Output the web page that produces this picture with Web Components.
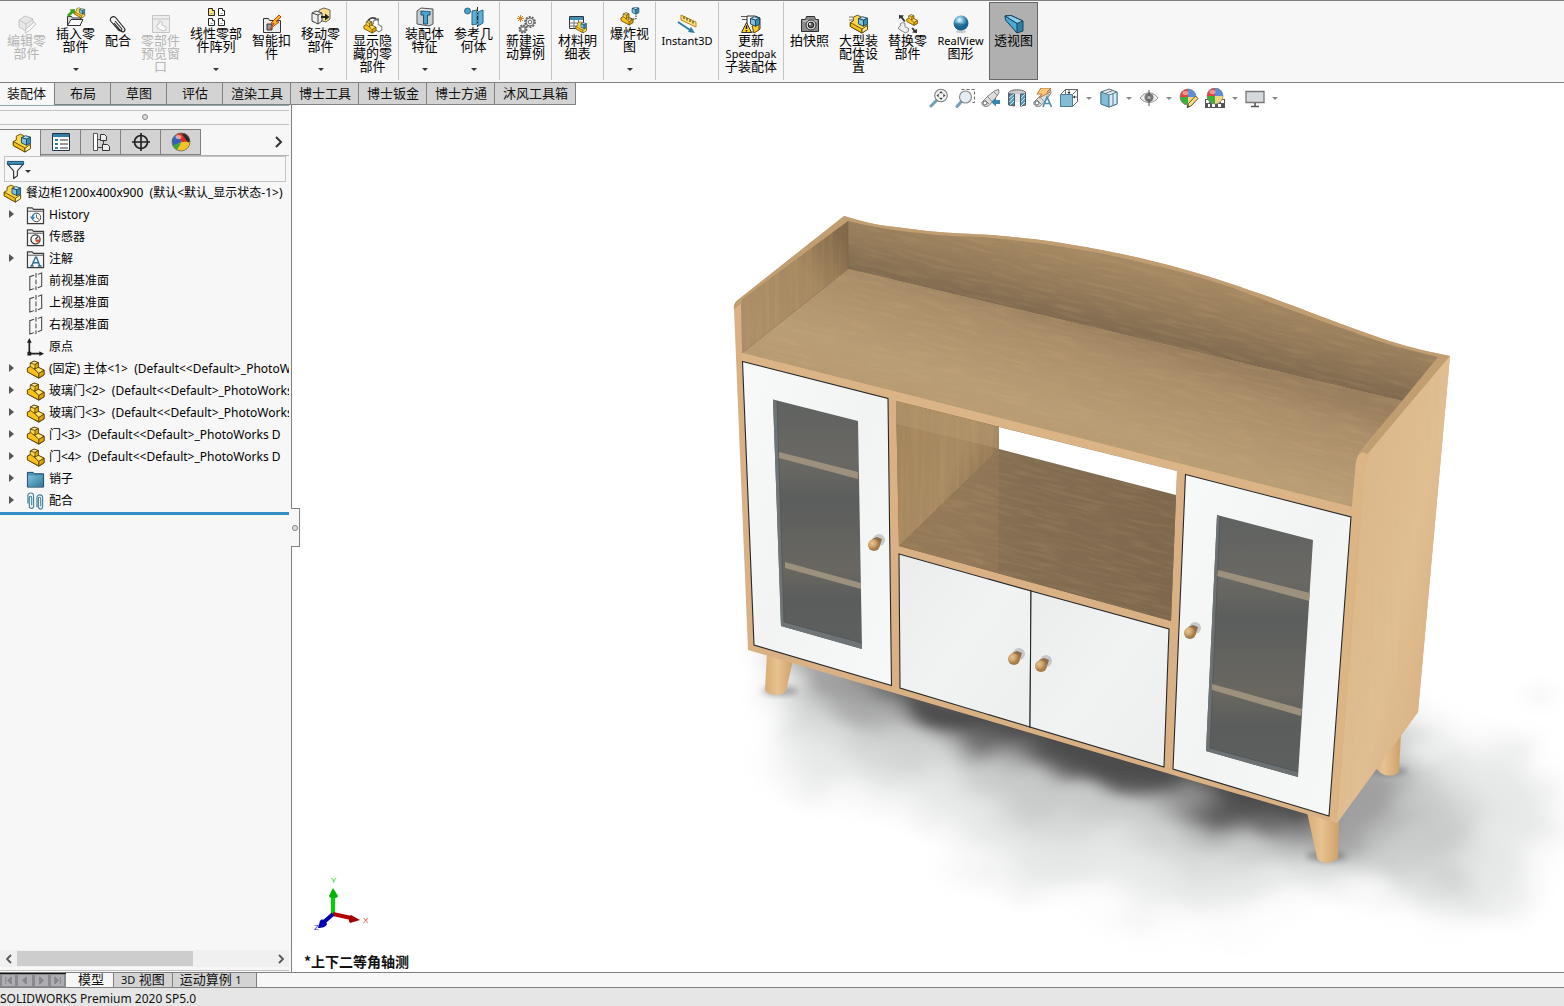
<!DOCTYPE html>
<html lang="zh-CN">
<head>
<meta charset="utf-8">
<title>SOLIDWORKS Premium 2020 SP5.0</title>
<style>
  html, body { height: 100%; margin: 0; }
  body { font: 12px/16px "Noto Sans", "Noto Sans CJK SC", sans-serif; color: #111; background: #fff; overflow: hidden; }
</style>
</head>
<body>
<sw-app>
  <sw-ribbon slot="ribbon">
    <sw-command icon="edit" disabled>编辑零部件</sw-command>
    <sw-command icon="insert" menu>插入零部件</sw-command>
    <sw-command icon="clip" size="s">配合</sw-command>
    <sw-command icon="preview" disabled>零部件预览窗口</sw-command>
    <sw-command icon="pattern" size="l" menu>线性零部件阵列</sw-command>
    <sw-command icon="fastener">智能扣件</sw-command>
    <sw-command icon="move" menu>移动零部件</sw-command>
    <sw-divider></sw-divider>
    <sw-command icon="showhide">显示隐藏的零部件</sw-command>
    <sw-divider></sw-divider>
    <sw-command icon="feature" menu>装配体特征</sw-command>
    <sw-command icon="refgeo" menu>参考几何体</sw-command>
    <sw-divider></sw-divider>
    <sw-command icon="motion">新建运动算例</sw-command>
    <sw-divider></sw-divider>
    <sw-command icon="bom">材料明细表</sw-command>
    <sw-divider></sw-divider>
    <sw-command icon="explode" menu>爆炸视图</sw-command>
    <sw-divider></sw-divider>
    <sw-command icon="instant" size="w"><small>Instant3D</small></sw-command>
    <sw-divider></sw-divider>
    <sw-command icon="speedpak" size="l">更新 <small>Speedpak</small> 子装配体</sw-command>
    <sw-divider></sw-divider>
    <sw-command icon="camera">拍快照</sw-command>
    <sw-command icon="large">大型装配体设置</sw-command>
    <sw-command icon="replace">替换零部件</sw-command>
    <sw-command icon="realview" size="m"><small>RealView</small> 图形</sw-command>
    <sw-command icon="perspective" pressed>透视图</sw-command>
  </sw-ribbon>

  <sw-tabs slot="tabs">
    <sw-tab active>装配体</sw-tab>
    <sw-tab>布局</sw-tab>
    <sw-tab>草图</sw-tab>
    <sw-tab>评估</sw-tab>
    <sw-tab>渲染工具</sw-tab>
    <sw-tab>博士工具</sw-tab>
    <sw-tab>博士钣金</sw-tab>
    <sw-tab>博士方通</sw-tab>
    <sw-tab last>沐风工具箱</sw-tab>
  </sw-tabs>

  <sw-feature-panel slot="panel">
    <sw-node icon="asm" root>餐边柜1200x400x900&nbsp; (默认&lt;默认_显示状态-1&gt;)</sw-node>
    <sw-node icon="history" more>History</sw-node>
    <sw-node icon="sensor">传感器</sw-node>
    <sw-node icon="note" more>注解</sw-node>
    <sw-node icon="plane">前视基准面</sw-node>
    <sw-node icon="plane">上视基准面</sw-node>
    <sw-node icon="plane">右视基准面</sw-node>
    <sw-node icon="origin">原点</sw-node>
    <sw-node icon="part" more>(固定) 主体&lt;1&gt;&nbsp; (Default&lt;&lt;Default&gt;_PhotoWorks</sw-node>
    <sw-node icon="part" more>玻璃门&lt;2&gt;&nbsp; (Default&lt;&lt;Default&gt;_PhotoWorks</sw-node>
    <sw-node icon="part" more>玻璃门&lt;3&gt;&nbsp; (Default&lt;&lt;Default&gt;_PhotoWorks</sw-node>
    <sw-node icon="part" more>门&lt;3&gt;&nbsp; (Default&lt;&lt;Default&gt;_PhotoWorks D</sw-node>
    <sw-node icon="part" more>门&lt;4&gt;&nbsp; (Default&lt;&lt;Default&gt;_PhotoWorks D</sw-node>
    <sw-node icon="folder" more>销子</sw-node>
    <sw-node icon="mates" more>配合</sw-node>
  </sw-feature-panel>

  <sw-viewport slot="view">
    <sw-hud slot="hud"></sw-hud>
    <sw-cabinet></sw-cabinet>
    <sw-triad slot="triad"></sw-triad>
    <span slot="caption">*上下二等角轴测</span>
  </sw-viewport>

  <sw-motion-tabs slot="motion"></sw-motion-tabs>
  <sw-status slot="status">SOLIDWORKS Premium 2020 SP5.0</sw-status>
</sw-app>

<script>
const define = (name, css, html, ready) => customElements.define(name, class extends HTMLElement {
  connectedCallback() {
    if (this.shadowRoot) return;
    const root = this.attachShadow({ mode: 'open' });
    root.innerHTML = `<style>:host,*{box-sizing:border-box}button,input{font:inherit;color:inherit;margin:0;padding:0;border:0;background:none}${css}</style>` +
      (typeof html === 'function' ? html(this) : html);
    if (ready) ready(this, root);
  }
});

/* ---------- icon library, 20 x 20 grid ---------- */
const PART = `<g stroke="#5a4300" stroke-width=".9" stroke-linejoin="round"><path fill="#ffd84a" d="M1.500 8.500l3-1.500V3.200l4-2 4.500 1.500v5l6 3v5l-5.500 3.600L1.500 12.500z"/><path fill="#f8c21e" d="M1.500 8.500L5 7l8.500 6.500v5.300L1.500 12.500z"/><path fill="#ffe36a" d="M8.500 9l4-1.500 6.500 3.200-5.500 3.500z"/><path fill="#e0a40e" d="M13.500 14.200l5.500-3.500v5l-5.500 3.100z"/><path fill="#ffee9a" d="M4.500 3.200l4-2 4.500 1.500-3.500 2z"/><path fill="#e3aa12" d="M9.500 4.700l3.500-2v5L9.500 9.500z"/></g>`;
const CUBE = `<g stroke="#17445c" stroke-width=".9" stroke-linejoin="round"><path fill="#b9e2f4" d="M9.500 4.500l4-1.800 5 1.500-4 2z"/><path fill="#7fc1e0" d="M9.500 4.500l5 1.700v6l-5-2.200z"/><path fill="#3e8fb8" d="M14.500 6.200l4-2v6l-4 2z"/></g>`;
const ASM = `<g stroke="#5a4300" stroke-width=".9" stroke-linejoin="round"><path fill="#ffd84a" d="M1.300 8.500l3-1.500V3.200l4-2 3.500 1.500v6l6.700 2v4.500L13 19 1.300 12.500z"/><path fill="#f8c21e" d="M1.300 8.500L13 15v4L1.300 12.500z"/><path fill="#fff0a0" d="M13 15l5.500-3.500v4L13 19z"/></g>${CUBE}`;
const FOLDER = `<path d="M1.500 3.500V2h5l1.500 1.500h10.500v15h-17z" fill="#ececec" stroke="#3c3c3c" stroke-width="1.200"/><path d="M2 5.500h16" stroke="#555"/><path d="M3 6.500h14v11H3z" fill="#f6f6f6"/>`;
const BALL = `<circle cx="9" cy="9" r="8" fill="#fff"/><path d="M9 9V1a8 8 0 0 0-8 8z" fill="#e8443a"/><path d="M9 9h8a8 8 0 0 0-8-8z" fill="#5b8fdd"/><path d="M9 9H1a8 8 0 0 0 8 8z" fill="#3cae3c"/><path d="M9 9v8a8 8 0 0 0 8-8z" fill="#f3d67c"/><circle cx="9" cy="9" r="8" fill="none" stroke="#777" stroke-width=".7"/><ellipse cx="6.500" cy="5" rx="3" ry="2" fill="#fff" opacity=".45"/>`;
const SCOPE = `<path d="M1 14l6-6 7-5.500 3.500-1 .5 3.500-4.500 6.500-5.500 6c-3 2.500-8.500 0-7-3.500z" fill="#dedede" stroke="#777" stroke-width=".9"/><path d="M6.500 8.500l4.500 5M13 3.500l3 4M4 12l4 4" stroke="#888" fill="none"/><circle cx="4" cy="15" r="2" fill="#fff" stroke="#666"/>`;
const ICONS = {
  part: PART, asm: ASM,
  edit: `<g opacity=".35" stroke="#666" fill="#ccc"><path d="M2 6l6-4 8 3v7l-7 5-7-4z"/><path d="M2 6l7 4v7M9 10l7-5"/><path fill="#fff" d="M17 8l2 2-7 7-4 2 1-4z"/></g>`,
  insert: `<path d="M1.500 18.500V9.500h4l1 1.500h8v7.500z" fill="#ddd" stroke="#333"/><path d="M1.500 18.500L5 12.500h12l-3 6z" fill="#fafafa" stroke="#333"/><path d="M1 8l4-4-1.500-1.500L9 2l-.5 5.500L7 6 3 10z" fill="#35a022"/><g transform="translate(8 0) scale(.58)">${ASM}</g>`,
  clip: `<path d="M6 9l7 8c2 2 5 0 3.500-2.500L8 4C5.500 1 .5 4 3 7.500l8 9c2 1 3.500-.5 2.500-2L7 7" fill="none" stroke="#222" stroke-width="1.100"/>`,
  preview: `<g opacity=".35"><path d="M1.500 1.500h17v17h-17z" fill="#ddd" stroke="#666"/><path d="M2 5h16" stroke="#666"/><path d="M6 11l2-1V7l3 1v3l4 2v3l-3 1-6-3z" fill="#fff" stroke="#666"/></g>`,
  pattern: `<g stroke="#222" fill="#fff"><path fill="#ffe27a" d="M2.500 1.500h4v2h2v5h-6z"/><path d="M12.500 1.500h4v2h2v5h-6zM2.500 11.500h4v2h2v5h-6zM12.500 11.500h4v2h2v5h-6z"/><path d="M4.500 6.500h2M14.500 6.500h2M4.500 16.500h2M14.500 16.500h2" stroke="#999"/></g>`,
  fastener: `<path d="M1.500 18.500V4.500h5l1 2h11v12z" fill="#eee" stroke="#333"/><path d="M5 10h5v6H5z" fill="#999" stroke="#333"/><path d="M17 1L9 9l3 .5L8 15l9-7-3-.5L19 3z" fill="#ffb52e" stroke="#c4400c"/>`,
  move: `<path d="M8 3l5-2 6 2v9l-4 3-7-2z" fill="#f9dc8c" stroke="#665"/><path d="M1 6l4-2 6 2v8l-4 3-6-3z" fill="#eee" stroke="#444"/><path d="M1 6l6 2 4-2M7 8v9" fill="none" stroke="#444"/><path d="M10 9h4V6.500L18.500 10 14 13.500V11h-4z" fill="#222"/>`,
  showhide: `<path d="M4 7c2-5 9-5 10-2l2-1-1 5-4-2 1.500-.8C11 4 7 4 6.500 7z" fill="#444"/><g transform="translate(8 5) scale(.6 .68)"><path d="M1 9l3-2V3l4-2 4 1v6l6 3v5l-5 3-12-7z" fill="#fff" stroke="#777" stroke-width="1.500"/></g><g transform="translate(0 6) scale(.68)">${PART}</g>`,
  feature: `<path d="M2 4l4-3 12 1v15l-4 2-12-2z" fill="#c9cdd0" stroke="#555"/><path d="M6 4h9v4h-2.500v9h-4V8H6z" fill="#4aa3cc" stroke="#1e5068"/><path d="M5 2.500l11 1" stroke="#fff"/>`,
  refgeo: `<circle cx="3.500" cy="4" r="3" fill="#4aa3cc" stroke="#1e5068" stroke-width=".8"/><path d="M8 4l5-1v14l-5 1zM14 5l5-2v13l-5 3z" fill="#5fb0d6" stroke="#276987"/><path d="M13.500 0v20" stroke="#222" stroke-dasharray="4 2 1 2"/>`,
  motion: `<g fill="none" stroke="#666"><circle cx="14" cy="8" r="5" stroke-width="1.800" stroke-dasharray="2 1.100"/><circle cx="14" cy="8" r="4" fill="#eee"/><circle cx="14" cy="8" r="1.800" fill="#fff"/><circle cx="7" cy="15" r="3.500" fill="#999" stroke-width="2" stroke-dasharray="1.800 .9"/></g><circle cx="7" cy="15" r="1.300" fill="#fff"/><path d="M4.500 1v7M1 4.500h7M2 2l5 5M7 2L2 7" stroke="#e0811c"/>`,
  bom: `<path d="M1.500 2.500h14v12h-14z" fill="#fff" stroke="#334"/><path d="M2 3h13v3H2z" fill="#3f8fb5"/><path d="M2 9h13M2 12h13M6 6v8M10.500 6v8" stroke="#556" stroke-width=".8"/><g transform="translate(7 7) scale(.62)">${ASM}</g>`,
  explode: `<g transform="translate(0 5) scale(.68)">${PART}</g><g transform="translate(5 -2) scale(.75)">${CUBE}</g><path d="M8 12h8V8" fill="none" stroke="#222" stroke-dasharray="1.500 1"/>`,
  instant: `<path d="M4 1l15 7v5L4 6z" fill="#ffe27a" stroke="#b48a1a"/><path d="M7 2.500v2.500M10 4v2.500M13 5.500V8M16 7v2.500" stroke="#222"/><path d="M1 8l12 8" stroke="#2e7ea8" stroke-width="2"/><path d="M11 18l7 1-4-6z" fill="#2e7ea8"/>`,
  speedpak: `<path d="M0 2.500h7M1 5.500h5" stroke="#555"/><path d="M6 2h8l5 2v11l-5 3H6z" fill="#f6f6f6" stroke="#333"/><path fill="#f8c62c" stroke="#6a5000" d="M11 12l7-2v6l-5 3z"/><g>${CUBE}</g><path d="M5.500 8.500l5 10H.5z" fill="#ffd21e" stroke="#333"/><path d="M5.500 11.500v3.500M5.500 16v1.500" stroke="#111" stroke-width="1.500"/>`,
  camera: `<path d="M1.500 5.500h4l1-3h8l1 3h3v12h-17z" fill="#8c8c8c" stroke="#2e2e2e"/><path d="M3 7h14" stroke="#ddd"/><circle cx="11" cy="11" r="5" fill="#ddd" stroke="#333"/><circle cx="11" cy="11" r="2.800" fill="#666" stroke="#111"/><circle cx="10" cy="10" r="1" fill="#fff"/>`,
  large: `<path d="M0 3h4M0 6h4" stroke="#777"/>${ASM}`,
  replace: `<g transform="translate(8 0) scale(.6)">${PART}</g><g transform="translate(0 8) scale(.58)"><path d="M1 9l3-2V3l4-2 4 1v6l6 3v5l-5 3-12-7z" fill="#eee" stroke="#777" stroke-width="1.500"/></g><path d="M1 1l5 .5-1.500 1.500 3 4-1.500 1-3-4L1 5zM19 19l-5-.5 1.500-1.500-2-2.500 1.500-1 2 2.500L19 15z" fill="#333"/>`,
  realview: `<defs><radialGradient id="s" cx=".4" cy=".3"><stop offset="0" stop-color="#fff"/><stop offset=".35" stop-color="#8ccbe8"/><stop offset="1" stop-color="#1e6a96"/></radialGradient></defs><ellipse cx="10" cy="17.500" rx="5" ry="1.500" fill="#ccc"/><circle cx="10" cy="9" r="7.500" fill="url(#s)"/><path d="M3 10c4-3 9 2 14-1-1 9-13 10-14 1z" fill="#175c86" opacity=".55"/>`,
  perspective: `<path d="M1 2l6-.5L19 7v10l-6 2z" fill="#2f7ea5" stroke="#154258"/><path d="M1 2l6-.5L19 7l-6 2.500z" fill="#8bd0ee" stroke="#154258"/><path d="M1 2l12 7.500V19L1.500 6z" fill="#4ca8d4" stroke="#154258"/>`,
  history: `${FOLDER}<circle cx="11" cy="12" r="4.500" fill="#fff" stroke="#444"/><path d="M11 9v3l2.500 2" stroke="#444" fill="none"/><path d="M4 11l3 4 2.500-3.500H8c0-3 3-4 3-4-4 0-5 3-5 3.800z" fill="#2e88b4"/>`,
  sensor: `${FOLDER}<circle cx="10" cy="12" r="4.800" fill="#fff" stroke="#333" stroke-width="1.300"/><path d="M10 12l2.500-3" stroke="#222" stroke-width="1.300"/><path d="M10 12h4l-1 4-3-2z" fill="#e04a1c"/>`,
  note: `${FOLDER}<path d="M6 16.500l4-9h1l3.500 9M7.500 13.500h5.500M4.500 16.800h3.500M12.500 16.800h4" fill="none" stroke="#2e6f96" stroke-width="1.500"/>`,
  plane: `<path d="M8.500 3.500L4 5v14L8.500 17.500M12.500 2.500l4-1.500v14l-4 1.500" fill="none" stroke="#444" stroke-width="1.100"/><path d="M10.500 1v18" stroke="#333" stroke-dasharray="5 2"/>`,
  origin: `<path d="M3.500 4v12.500H16" fill="none" stroke="#222" stroke-width="1.800"/><path d="M3.500 0L6 5H1zM19 16.500L14 14v5z" fill="#222"/><path d="M1.500 14.500h4v4h-4z" fill="#222"/>`,
  folder: `<defs><linearGradient id="f" x2="1" y2="1"><stop stop-color="#7cc0de"/><stop offset="1" stop-color="#347695"/></linearGradient></defs><path d="M1.500 5V2.500h6L9 4h9.500v14h-17z" fill="#4c97bb" stroke="#143f54"/><path d="M2 6h16v11.500H2z" fill="url(#f)"/>`,
  mates: `<g fill="none" stroke="#43829f" stroke-width="1.200"><path d="M2 12V4c0-4 6-4 6 0v11c0 3-4.500 3-4.500 0V6c0-2 2.500-2 2.500 0v8"/><path d="M11.500 16V6c0-4 6-4 6 0v9c0 4-4.500 4-4.500 0V7c0-2 2.500-2 2.500 0v8"/></g>`,
  list: `<path d="M1.500 1.500h17v17h-17z" fill="#fff" stroke="#234"/><path d="M2 2h16v3H2z" fill="#2e7ea8"/><path d="M4 8h3M4 12h3M4 16h3" stroke="#2e7ea8" stroke-width="2"/><path d="M9 8h8M9 12h8M9 16h8" stroke="#333"/>`,
  config: `<path d="M2.500 1.500h4v17h-4z" fill="#fff" stroke="#555"/><path d="M7 7.500h3M7 15.500h4M12.500 12V8" fill="none" stroke="#444" stroke-width="1.200"/><path d="M9.500 2.500h4l2 2v4h-6zM11.500 12.500h5l2 2v4h-7z" fill="#eee" stroke="#333"/>`,
  target: `<circle cx="10" cy="10" r="6.500" fill="none" stroke="#222" stroke-width="1.700"/><path d="M10 1v18M1 10h18" stroke="#222" stroke-width="1.700"/>`,
  appearance: `<circle cx="10" cy="10" r="9" fill="#f2c522"/><path d="M1 9a9 9 0 0 1 4-6l6 7-9 4z" fill="#2f63bd"/><path d="M11 10L4.500 3.500a9 9 0 0 1 9-2l4 8z" fill="#de2d22"/><path d="M11 2l3-.5a9 9 0 0 1 5 8l-2 1z" fill="#2b2b2b"/><path d="M2 13a9 9 0 0 0 4 5l4-7z" fill="#3aa840"/><circle cx="10" cy="10" r="9" fill="none" stroke="#555" stroke-width=".7"/><ellipse cx="7.500" cy="5" rx="3" ry="2" fill="#fff" opacity=".55"/>`,
  funnel: `<path d="M2 4.500l6 7v8l4-3v-5l6-7z" fill="#f4f8fa" stroke="#333" stroke-width="1.200"/><path d="M1.500 1.500h17v3h-17z" fill="#3c93bd" stroke="#1e5068"/>`,
  zoomfit: `<path d="M8 12l-6 6" stroke="#6fa0b8" stroke-width="3" stroke-linecap="round"/><circle cx="12" cy="7.500" r="6.300" fill="#f4f7f8" stroke="#777" stroke-width="1.100"/><path d="M12 3l2 2.200h-4zM12 12l2-2.200h-4zM7.500 7.500L9.700 5.500v4zM16.500 7.500l-2.200-2v4z" fill="#444"/>`,
  zoomarea: `<path d="M6.500 1.500h13v13h-4" fill="none" stroke="#666" stroke-dasharray="3 2"/><path d="M6 14l-4 4.500" stroke="#6fa0b8" stroke-width="3" stroke-linecap="round"/><circle cx="10.500" cy="9" r="6" fill="#e4eef4" stroke="#888" stroke-width="1.100"/>`,
  prev: `${SCOPE}<path d="M19 12h-4V9.500L10 14l5 4.500V16h4z" fill="#3a86ad"/>`,
  section: `<path d="M1.500 4.500C4 1 15 1 18.500 4v13l-5 1V9c-2-1-5-1-6 0v9l-6-1z" fill="#c9cdd0" stroke="#666"/><path d="M7.500 6h6v8h-6z" fill="#e4e6e8"/><path d="M2 6h5.500v11.500L2 16.500zM13.500 6h5v11l-5 1z" fill="#5f9dbb" stroke="#456"/><path d="M2 10l5-4M2 14l5-5M3 17l4-4M14 10l4-4M14 14l4-4M14 18l4-4" stroke="#c8e4f0"/>`,
  dynview: `${SCOPE}<path d="M8 0h10l-4 4h3L6 10l3-4H4z" fill="#ffc878" stroke="#b8753c"/><path d="M10 19l4-10 4.500 10M11.500 15.500h5" fill="none" stroke="#4f90b0" stroke-width="1.700"/>`,
  orient: `<path d="M1.500 6.500l5-5h12v12l-5 5M13.500 6.500l5-5M6.500 1.500v5M13.500 9h5M10 2v3" fill="#fff" stroke="#666"/><path d="M1.500 6.500h12v12h-12z" fill="#84bcd8" stroke="#4a7c96"/><path d="M8.500 4h3L10 6.500zM16 7.500v3L14 9z" fill="#333"/>`,
  style: `<path d="M2 4l8-3 8 3v12l-8 3-8-3z" fill="#eef3f5" stroke="#567"/><path d="M2 4l8 3v12l-8-3z" fill="#84bcd8" stroke="#4a7c96"/><path d="M10 7l8-3v12l-8 3z" fill="#d4eaf4" stroke="#4a7c96"/><path d="M6 5.500l8-3M14 5.500v12" stroke="#678"/>`,
  eye: `<path d="M1 10c5-7 13-7 18 0-5 6-13 6-18 0z" fill="#eee" stroke="#999"/><circle cx="10" cy="9.500" r="4.500" fill="#777"/><path d="M10 2v16" stroke="#555"/><circle cx="10" cy="9.500" r="1.500" fill="#bbb"/>`,
  appear: `${BALL}<path d="M16.500 8l2.500 2.500-7 7.500-4 1.500 1.500-4z" fill="#f6dc8c" stroke="#665522"/><path d="M8 19.500l1-2.500 1.500 1.500z" fill="#333"/>`,
  scene: `<path d="M0 11h20v9H0z" fill="#555"/><path d="M1 12h3v3H1zM7 16h3v3H7zM13 16h3v3h-3zM16 12h3v3h-3zM3 16h2v3H3z" fill="#fff"/><g transform="translate(1 -1)">${BALL}</g>`,
  monitor: `<path d="M1 3.500h18v11H1z" fill="#d6d9dc" stroke="#777" stroke-width="1.300"/><path d="M10 15v3M6 18.500h8" stroke="#555" stroke-width="1.600"/>`
};
define('sw-icon', `:host{display:block;width:20px;height:20px;flex:none}svg{display:block;width:100%;height:100%}`,
  el => `<svg viewBox="0 0 20 20" aria-hidden="true">${ICONS[el.getAttribute('name')]}</svg>`);

/* ---------- application frame ---------- */
define('sw-app', `
  :host{display:grid;height:100vh;grid-template:auto auto minmax(0,1fr) auto auto / 292px minmax(0,1fr);background:#fff}
  ::slotted([slot=ribbon]){grid-area:1/1/2/3}
  ::slotted([slot=view]){grid-area:2/1/4/3}
  ::slotted([slot=tabs]){grid-area:2/1/3/3;z-index:1;justify-self:start}
  ::slotted([slot=panel]){grid-area:3/1/4/2;z-index:1}
  ::slotted([slot=motion]){grid-area:4/1/5/3}
  ::slotted([slot=status]){grid-area:5/1/6/3}`,
  `<slot name="ribbon"></slot><slot name="view"></slot><slot name="tabs"></slot><slot name="panel"></slot><slot name="motion"></slot><slot name="status"></slot>`);

define('sw-ribbon', `:host{display:block;border-top:1px solid #808080;border-bottom:1px solid #808080;background:#f7f7f7}
  nav{display:flex;height:81px;padding:1px 0 2px 2px}`, `<nav><slot></slot></nav>`);
define('sw-divider', `:host{display:block;flex:none;width:3px;padding-left:1px}i{display:block;width:1px;height:100%;background:#c4c4c4}`, `<i></i>`);
define('sw-command', `
  :host{display:block;flex:none;width:49px;font:13px/13px "Liberation Sans","Noto Sans CJK SC",sans-serif;color:#000}
  :host([size=s]){width:36px}:host([size=m]){width:57px}:host([size=w]){width:60px}:host([size=l]){width:62px}
  button{display:flex;flex-direction:column;align-items:center;width:100%;height:100%;padding:12px 3px 0}
  :host([menu]) button{padding-top:5px}
  :host([disabled]) button{color:#b4b4b4}
  :host([pressed]) button{background:#b0b0b0;outline:1px solid #666;outline-offset:-1px}
  span{display:block;text-align:center}
  ::slotted(small){font:11px/11px "Noto Sans",sans-serif}
  i{display:none;margin:auto 0 9px;border:3px solid transparent;border-top-color:#333;border-bottom:0}
  :host([menu]) i{display:block}`,
  el => `<button type="button"${el.hasAttribute('disabled') ? ' disabled' : ''}><sw-icon name="${el.getAttribute('icon')}"></sw-icon><span><slot></slot></span><i></i></button>`);

define('sw-tabs', `:host{display:flex}`, `<slot></slot>`);
define('sw-tab', `
  :host{display:block;font-size:13px;line-height:20px}
  button{display:block;min-width:56px;height:22px;padding:0 7px 1px 8px;background:#d3d3d3;border-left:1px solid #808080;border-bottom:1px solid #808080;white-space:nowrap}
  :host([active]) button{min-width:0;padding:0 8px 1px 7px;background:#f7f7f7;border-left:0;border-bottom-color:#f7f7f7}
  :host([last]) button{border-right:1px solid #808080}`, `<button type="button"><slot></slot></button>`);

/* ---------- feature manager ---------- */
define('sw-feature-panel', `
  :host{position:relative;display:flex;flex-direction:column;min-height:0;background:#f7f7f7;border-right:1px solid #808080;padding-right:2px}
  .grip{flex:none;height:20px;border-top:1px solid #8fa9b0;border-bottom:1px solid #c0c0c0;display:grid;grid-template-rows:4px 1fr;justify-items:center;align-items:center}
  .grip::before{content:"";width:100%;height:4px;border-bottom:1px solid #c4c4c4}
  .dot{width:6px;height:6px;border:1px solid #888;border-radius:50%;background:#ddd}
  .tabs{flex:none;display:flex;margin-top:4px;height:27px;border-bottom:1px solid #b0b0b0}
  .tabs button{display:grid;place-items:center;width:40px;height:26px;background:#d3d3d3;border:1px solid #808080;border-left:0}
  .tabs button.on{width:41px;padding-left:3px;height:27px;background:#f7f7f7;border-bottom:0}
  .tabs .next{margin-left:auto;width:20px;background:none;border:0}
  .filter{flex:none;display:flex;align-items:center;margin:0 3px 0 4px;height:26px;border:1px solid #c4c4c4;padding-left:1px}
  .filter sw-icon{width:19px;height:19px}
  .filter i{border:3px solid transparent;border-top-color:#333;border-bottom:0;margin-top:4px}
  .filter input{flex:1;min-width:0;outline:0}
  .tree{flex:none;overflow:hidden;border-bottom:3px solid #338fc5}
  .rest{flex:1}
  .bar{flex:none;display:flex;height:17px;background:#f0f0f0;margin-bottom:3px}
  .bar button{width:17px;display:grid;place-items:center}
  .track{flex:1;display:flex;align-items:center}.thumb{width:69%;height:15px;background:#cdcdcd}
  .foot{flex:none;height:2px;border-top:1px solid #c0c0c0}
  .handle{position:absolute;left:100%;top:403px;width:9px;height:39px;background:#f7f7f7;border:1px solid #808080;border-left:0;display:grid;place-items:center}`,
  `<div class="grip"><div class="dot"></div></div>
  <div class="tabs">
    <button type="button" class="on" aria-label="FeatureManager"><sw-icon name="asm"></sw-icon></button>
    <button type="button" aria-label="PropertyManager"><sw-icon name="list"></sw-icon></button>
    <button type="button" aria-label="ConfigurationManager"><sw-icon name="config"></sw-icon></button>
    <button type="button" aria-label="DimXpertManager"><sw-icon name="target"></sw-icon></button>
    <button type="button" aria-label="DisplayManager"><sw-icon name="appearance"></sw-icon></button>
    <button type="button" class="next" aria-label="Next"><svg width="8" height="12" viewBox="0 0 8 12"><path d="M1 1l5 5-5 5" fill="none" stroke="#333" stroke-width="2"/></svg></button>
  </div>
  <label class="filter"><sw-icon name="funnel"></sw-icon><i></i><input type="text" aria-label="Filter"></label>
  <div class="tree" role="tree"><slot></slot></div>
  <div class="rest"></div>
  <div class="bar">
    <button type="button" aria-label="Left"><svg width="6" height="10" viewBox="0 0 6 10"><path d="M5 1L1 5l4 4" fill="none" stroke="#555" stroke-width="1.800"/></svg></button>
    <div class="track"><div class="thumb"></div></div>
    <button type="button" aria-label="Right"><svg width="6" height="10" viewBox="0 0 6 10"><path d="M1 1l4 4-4 4" fill="none" stroke="#555" stroke-width="1.800"/></svg></button>
  </div>
  <div class="foot"></div>
  <div class="handle"><div class="dot"></div></div>`);
define('sw-node', `
  :host{display:flex;align-items:center;height:22px;padding-left:9px;font-size:12px;line-height:20px;color:#000}
  :host([root]){padding-left:3px}
  i{flex:none;width:5px;margin-right:12px;height:0}
  :host([more]) i{height:8px;border:4px solid transparent;border-left:5px solid #555;border-right:0;margin-bottom:2px}
  :host([root]) i{display:none}
  sw-icon{width:19px;height:19px}
  span{flex:1;min-width:0;overflow:hidden;white-space:nowrap;margin-left:4px}`,
  el => `<i></i><sw-icon name="${el.getAttribute('icon')}"></sw-icon><span role="treeitem"><slot></slot></span>`);

/* ---------- graphics area ---------- */
define('sw-viewport', `
  :host{display:grid;grid-template:auto minmax(0,1fr) auto / minmax(0,1fr);background:#fff;padding-left:292px;min-height:0}
  .scene{grid-area:1/1/4/2;min-height:0}
  .hud{grid-area:1/1;z-index:1;justify-self:end;padding:5px 282px 0 0}
  .foot{grid-area:3/1;z-index:1;padding:0 0 2px 12px;justify-self:start}
  ::slotted([slot=caption]){display:block;font:bold 14px/18px "Noto Sans CJK SC",sans-serif;color:#111}`,
  `<div class="scene"><slot></slot></div><div class="hud"><slot name="hud"></slot></div><div class="foot"><slot name="triad"></slot><slot name="caption"></slot></div>`);

define('sw-hud', `:host{display:flex;height:20px}button{display:grid;place-items:center;width:26px}button.m{width:14px}
  i{border:3px solid transparent;border-top-color:#888;border-bottom:0}`,
  () => ['zoomfit', 'zoomarea', 'prev', 'section', 'dynview', 'orient+', 'style+', 'eye+', 'appear', 'scene+', 'monitor+'].map(n => {
    const id = n.replace('+', '');
    return `<button type="button" aria-label="${id}"><sw-icon name="${id}"></sw-icon></button>` +
      (n !== id ? `<button type="button" class="m" aria-label="${id} menu"><i></i></button>` : '');
  }).join(''));

define('sw-triad', `:host{display:block;width:66px;height:58px;margin-bottom:20px}svg{display:block}text{font:8px "Liberation Sans",sans-serif}`,
  `<svg width="66" height="58" viewBox="304 874 66 58"><path d="M333 914V897" stroke="#00d400" stroke-width="4"/><path d="M333 888l5 8c-1 3-8 3-9 0z" fill="#00b400"/><path d="M333 914l18 4" stroke="#b40000" stroke-width="4"/><path d="M360 920l-10 3c-2-2-1-7 1-8z" fill="#a00000"/><path d="M333 914l-9 8" stroke="#0000a0" stroke-width="4"/><path d="M318 928l2-7c2-3 6-1 7 3-1 3-5 4-9 4z" fill="#0000b4"/>
  <text x="331" y="883" fill="#00d400">Y</text><text x="363" y="923" fill="#f04040">X</text><text x="314" y="930" fill="#2020e0">Z</text></svg>`);

const knob = (x, y) => `<circle cx="${x + 5}" cy="${y - 5}" r="6" fill="#b9b9bb" opacity=".75"/><path d="M${x - 2} ${y - 6}l5-2 5 2-2 6-4 2z" fill="#8c6c4a"/><circle cx="${x}" cy="${y}" r="6" fill="url(#knob)"/>`;
define('sw-cabinet', `:host{display:block;height:100%}svg{display:block;width:100%;height:100%}`, `
<svg viewBox="292 83 1272 889" preserveAspectRatio="xMidYMid slice" role="img">
<defs>
  <linearGradient id="top" gradientUnits="userSpaceOnUse" x1="1085" y1="320" x2="1045" y2="450"><stop stop-color="#9a7f5e"/><stop offset=".2" stop-color="#aa8e6a"/><stop offset=".7" stop-color="#b99d76"/><stop offset="1" stop-color="#b79a72"/></linearGradient>
  <linearGradient id="back" gradientUnits="userSpaceOnUse" x1="1140" y1="250" x2="1118" y2="345"><stop stop-color="#aa8e68"/><stop offset=".5" stop-color="#967c5a"/><stop offset="1" stop-color="#78654d"/></linearGradient>
  <linearGradient id="inL" gradientUnits="userSpaceOnUse" x1="742" y1="320" x2="848" y2="245"><stop stop-color="#ac8f68"/><stop offset=".6" stop-color="#a68962"/><stop offset="1" stop-color="#836a4a"/></linearGradient>
  <linearGradient id="side" gradientUnits="userSpaceOnUse" x1="1345" y1="600" x2="1435" y2="620"><stop stop-color="#dcb98c"/><stop offset=".6" stop-color="#e0bf93"/><stop offset="1" stop-color="#dbb588"/></linearGradient>
  <linearGradient id="wall" gradientUnits="userSpaceOnUse" x1="896" y1="450" x2="985" y2="490"><stop stop-color="#a4865e"/><stop offset=".6" stop-color="#a88a63"/><stop offset="1" stop-color="#907553"/></linearGradient>
  <linearGradient id="floor" gradientUnits="userSpaceOnUse" x1="940" y1="540" x2="1170" y2="540"><stop stop-color="#8e7555"/><stop offset=".4" stop-color="#836d52"/><stop offset="1" stop-color="#7d684e"/></linearGradient>
  <linearGradient id="door" x2="1" y2="1"><stop stop-color="#f8fafa"/><stop offset=".5" stop-color="#f2f4f4"/><stop offset="1" stop-color="#f7f9f9"/></linearGradient>
  <linearGradient id="door2" x2="1" y2="1"><stop stop-color="#ebeded"/><stop offset=".5" stop-color="#f1f3f3"/><stop offset="1" stop-color="#edefef"/></linearGradient>
  <linearGradient id="glass" x2="0" y2="1"><stop stop-color="#5f6261"/><stop offset=".25" stop-color="#6a6863"/><stop offset=".4" stop-color="#5b5e5d"/><stop offset=".68" stop-color="#6a6761"/><stop offset=".8" stop-color="#5a5d5c"/><stop offset="1" stop-color="#5c605f"/></linearGradient>
  <linearGradient id="leg"><stop stop-color="#d8ac75"/><stop offset=".45" stop-color="#e6c391"/><stop offset="1" stop-color="#cfa06a"/></linearGradient>
  <radialGradient id="knob" cx=".35" cy=".35"><stop stop-color="#e6c491"/><stop offset=".6" stop-color="#cfa36b"/><stop offset="1" stop-color="#a67d4c"/></radialGradient>
  <filter id="mist" filterUnits="userSpaceOnUse" x="680" y="560" width="960" height="440"><feGaussianBlur stdDeviation="17" result="b"/><feTurbulence type="fractalNoise" baseFrequency=".012 .016" numOctaves="2" seed="3"/><feDisplacementMap in="b" scale="60" xChannelSelector="R" yChannelSelector="G"/><feGaussianBlur stdDeviation="3"/></filter>
  <filter id="cloud" filterUnits="userSpaceOnUse" x="680" y="580" width="960" height="420"><feGaussianBlur stdDeviation="11" result="b"/><feTurbulence type="fractalNoise" baseFrequency=".012 .018" numOctaves="2" seed="7"/><feDisplacementMap in="b" scale="50" xChannelSelector="R" yChannelSelector="G"/><feGaussianBlur stdDeviation="3"/></filter>
  <filter id="b9" x="-30%" y="-60%" width="160%" height="220%"><feGaussianBlur stdDeviation="9"/></filter>
  <filter id="b3" x="-50%" y="-50%" width="200%" height="200%"><feGaussianBlur stdDeviation="3"/></filter>
  <filter id="grain" x="0" y="0" width="100%" height="100%"><feTurbulence type="fractalNoise" baseFrequency=".03 .3" numOctaves="3" seed="4"/><feColorMatrix values="0 0 0 0 .74  0 0 0 0 .52  0 0 0 0 .24  1.900 0 0 0 -.8"/></filter>
  <filter id="grainV" x="0" y="0" width="100%" height="100%"><feTurbulence type="fractalNoise" baseFrequency=".2 .01" numOctaves="3" seed="9"/><feColorMatrix values="0 0 0 0 .74  0 0 0 0 .48  0 0 0 0 .2  1.900 0 0 0 -.8"/></filter>
  <clipPath id="cH"><path d="M848 269L848 221Q884 230 920 233C1010 237 1070 248 1140 262S1347 330 1347 330 1400 349 1438 357L1356 462 1352 517 742 361V353z M999 449L1176 495 1171 621 899 546z M748 640L1337 812V823L748 650z"/></clipPath>
  <clipPath id="cV"><path d="M1450 356L1367 455 1365 464 1337 823 1418 712z M848 221L741 300V353L848 269z M896 401L999 427V449L899 546z"/></clipPath>
</defs>
<g>
  <g filter="url(#mist)">
    <path d="M775 640L770 720 790 780 910 800 960 865 1060 885 1130 910 1260 915 1320 890 1450 910 1525 900 1560 820 1520 755 1430 715 1300 700z" fill="#e6e7e7"/>
    <path d="M785 660L810 715 860 745 960 775 1010 815 1150 840 1310 870 1430 880 1480 845 1460 785 1410 745 1300 720 900 650z" fill="#c9caca"/>
  </g>
  <g filter="url(#cloud)">
    <path d="M785 660L820 705 900 728 1000 758 1060 785 1120 795 1200 825 1330 855 1380 850 1405 800 1405 760 1300 740 900 650z" fill="#999" opacity=".85"/>
    <path d="M850 670L925 726 990 742 1060 772 1180 800 1250 822 1310 838 1340 800 1100 690z" fill="#484848" opacity=".95"/>
  </g>
  <g filter="url(#b9)"><ellipse cx="1420" cy="750" rx="26" ry="6" fill="#fff" opacity=".7"/><ellipse cx="1540" cy="695" rx="18" ry="7" fill="#f4f4f4"/><ellipse cx="1360" cy="885" rx="36" ry="9" fill="#fff" opacity=".7"/></g>
  <ellipse cx="780" cy="691" rx="18" ry="4" fill="#555" opacity=".5" filter="url(#b3)"/><ellipse cx="1326" cy="856" rx="20" ry="5" fill="#555" opacity=".5" filter="url(#b3)"/><ellipse cx="1388" cy="771" rx="20" ry="4" fill="#555" opacity=".5" filter="url(#b3)"/>
</g>
<g fill="url(#leg)"><path d="M767 652L793 660 786 691C782 697 768 696 765 690z"/><path d="M1307 812L1339 820 1338 858C1333 864 1321 865 1317 858z"/><path d="M1370 765L1401 733 1399 772C1393 778 1381 776 1378 770z"/></g>
<path d="M844 216Q870 224 887 226T927 231C960 234 985 234 1003 236 1050 240 1090 247 1140 258 1200 272 1240 287 1267 296 1310 312 1330 320 1347 326 1390 342 1410 348 1450 356L1418 712 1337 823 748 650 734 309Q733 303 739 299z" fill="#d9b184"/>
<path d="M844 216Q870 224 887 226T927 231C960 234 985 234 1003 236 1050 240 1090 247 1140 258 1200 272 1240 287 1267 296 1310 312 1330 320 1347 326 1390 342 1410 348 1450 356L1367 455 1365 464H1356L742 303 734 309Q733 303 739 299z" fill="#c19e72"/>
<path d="M848 221L745 297Q741 299 741 306L742 353 848 269z" fill="url(#inL)"/>
<path d="M848 221Q884 230 920 233C940 236 960 236 980 237 1030 241 1090 250 1140 262 1200 275 1240 290 1267 301 1310 317 1330 324 1347 330 1390 346 1410 350 1438 357L1402 401 848 269z" fill="url(#back)"/>
<path d="M848 269L1402 401 1361 450Q1357 455 1356 462L1352 507 742 353z" fill="url(#top)"/>
<path d="M850 316L802 362" stroke="#c4a780" stroke-width="1" opacity=".4"/>
<path d="M848 221V269L742 353" fill="none" stroke="#705a3e" stroke-width="1" opacity=".4"/>
<path d="M742 353L1352 507V517L742 361z" fill="#dbb487"/>
<path d="M1450 356L1370 451Q1365 457 1365 464L1337 823 1418 712z" fill="url(#side)"/>
<path d="M1356 462Q1357 455 1362 452L1370 455 1365 464 1356 560 1337 823 1329 820 1351 517z" fill="#dcb585"/>
<path d="M896 401L1177 471 1171 621 899 546z" fill="#80684a"/>
<path d="M896 401L999 427V449L899 546z" fill="url(#wall)"/>
<path d="M896 401L999 427V449L988 446 896 424z" fill="#b79c74" opacity=".45"/>
<path d="M999 449L1176 495 1171 621 899 546z" fill="url(#floor)"/>
<path d="M999 449L899 546 998 573z" fill="#ad8d62" opacity=".2"/>
<path d="M999 427L1177 471 1176 495 999 449z" fill="#fff"/>
<g clip-path="url(#cH)"><rect x="600" y="-100" width="1100" height="950" filter="url(#grain)" opacity=".18" transform="rotate(14 742 353)"/></g>
<g clip-path="url(#cV)"><rect x="700" y="200" width="800" height="650" filter="url(#grainV)" opacity=".2"/></g>
<g stroke="#26282a" stroke-width="1.100">
  <path d="M742.500 361.500L888 398.500 891.500 685.500 754 645z" fill="url(#door)"/>
  <path d="M899 554L1031 591 1030 727 900 688z" fill="url(#door2)"/>
  <path d="M1031 591L1169 629 1164 767 1030 727z" fill="url(#door2)"/>
  <path d="M1185.500 474.500L1351 517 1329 816 1173 769z" fill="url(#door)"/>
</g>
<path d="M773 399.500L858 421 862 649 781 626z" fill="url(#glass)"/>
<path d="M773 399.500L777 401 784 622 862 643V649L781 626z" fill="#6f7576"/><path d="M777 401L784 622 862 643" fill="none" stroke="#4b4f50" stroke-width=".6"/>
<path d="M779 452L858 472V479L779 458zM785 562L861 583V589L785 568z" fill="#9b917c"/>
<path d="M1217 515L1313 540 1298 777 1206 751z" fill="url(#glass)"/>
<path d="M1217 515L1220 516 1210 748 1298 772V777L1206 751z" fill="#6c7273"/><path d="M1220 516L1210 748 1298 772" fill="none" stroke="#4b4f50" stroke-width=".6"/>
<path d="M1218 570L1310 593 1309 601 1217 576zM1212 684L1302 709 1301 716 1212 690z" fill="#9b917c"/>
${knob(874, 545)}${knob(1014, 659)}${knob(1041, 666)}${knob(1190, 633)}
</svg>`);

/* ---------- bottom bars ---------- */
define('sw-motion-tabs', `
  :host{display:flex;height:16px;background:#f7f7f7;border-top:1px solid #808080;border-bottom:1px solid #808080;font-size:13px;line-height:12px}
  nav{display:flex;width:66px;background:#8b8b8b;border-top:1px solid #111;gap:1px;padding:0 1px}
  nav button{flex:1;display:grid;place-items:center;background:#aeaeb2;border:1px solid #8a8a8e}
  .t{height:14px;padding:0 7px 2px;background:#d3d3d3;border-right:1px solid #808080;white-space:nowrap}
  .t.on{background:#f7f7f7;padding:0 9px 2px 12px}.t.w{padding-right:15px}small{font-size:11px}`,
  () => `<nav>${['M2 1v8M8 1L4 5l4 4z', 'M7 1L3 5l4 4z', 'M3 1l4 4-4 4z', 'M8 1v8M2 1l4 4-4 4z'].map((d, i) => `<button type="button" aria-label="${['First', 'Previous', 'Next', 'Last'][i]}"><svg width="9" height="9" viewBox="0 0 10 10"><path d="${d}" fill="#8a8a8e" stroke="#808084"/></svg></button>`).join('')}</nav>
  <button type="button" class="t on">模型</button><button type="button" class="t"><small>3D</small> 视图</button><button type="button" class="t w">运动算例 <small>1</small></button>`);
define('sw-status', `:host{display:block;height:18px;background:#e6e6e6;font-size:12px;line-height:21px;color:#111}`, `<slot></slot>`);
</script>
</body>
</html>
